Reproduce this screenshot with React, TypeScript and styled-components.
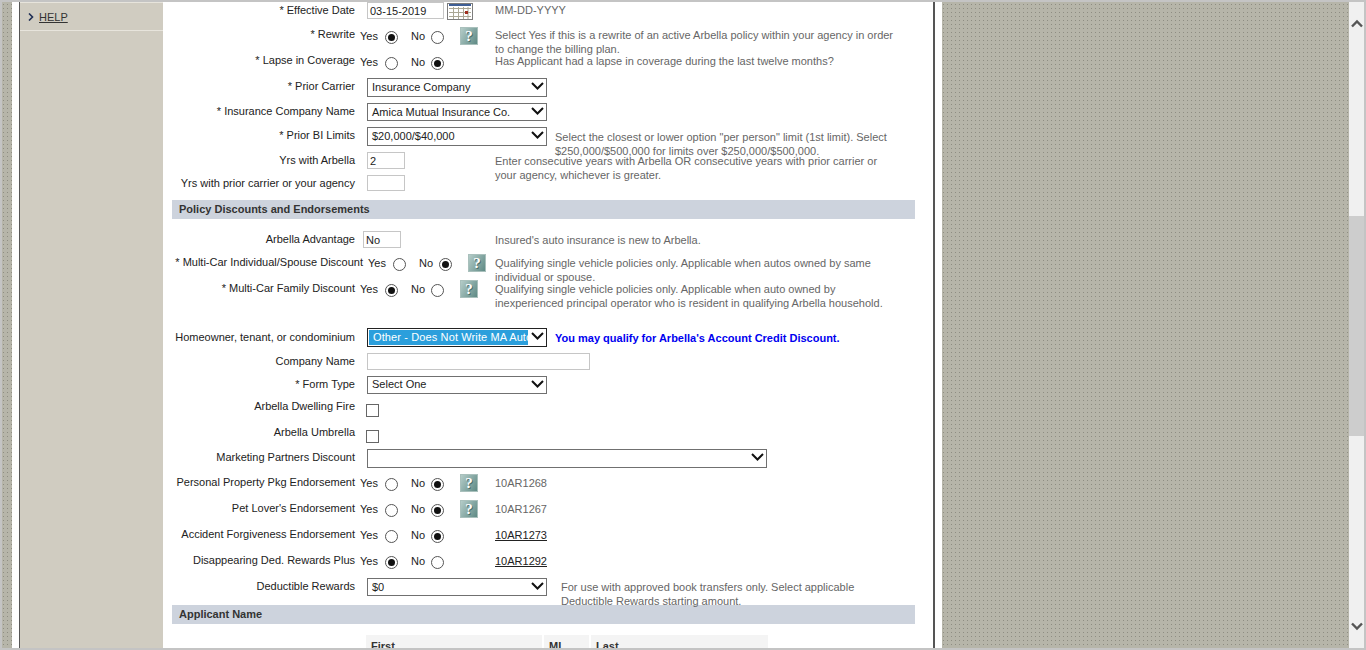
import React from "react";
import styled, { createGlobalStyle } from "styled-components";

const Global = createGlobalStyle`
  html, body { margin: 0; padding: 0; height: 650px; overflow: hidden; background: #fff; }
  body { font-family: "Liberation Sans", Arial, sans-serif; font-size: 11px; color: #222; }
`;

const Frame = styled.div`
  width: 1366px; height: 650px; box-sizing: border-box;
  border: 2px solid #c4c4c4; display: flex; overflow: hidden;
`;
const Texture = styled.div<{ $w: number }>`
  flex: 0 0 ${p => p.$w}px; height: 100%;
  background-color: #b6b5a9;
  background-image: radial-gradient(circle at 1.5px 2.5px, #8e8d82 0.7px, transparent 0.71px);
  background-size: 4px 4px;
`;
const Gutter = styled.div<{ $w: number }>`
  flex: 0 0 ${p => p.$w}px; background: #fff;
`;
const Page = styled.div`
  flex: 0 0 915px; display: flex; height: 100%; box-sizing: border-box;
  border-left: 1px solid #555; border-right: 2px solid #555;
`;
const Sidebar = styled.aside`flex: 0 0 143px; background: #d0ccc1;`;
const NavItem = styled.div`
  height: 29px; display: flex; align-items: center; padding-left: 8px; gap: 5px;
  border-top: 1px solid #e7e4dc; border-bottom: 1px solid #e7e4dc; box-sizing: border-box;
`;
const NavLink = styled.a`color: #333; text-decoration: underline; font-size: 11px;`;
const NavChevron = styled.svg`flex: none;`;
const Main = styled.main`flex: 0 0 770px; background: #fff; padding-right: 18px; box-sizing: border-box;`;

const Row = styled.div<{ $h: number }>`display: flex; align-items: flex-start; height: ${p => p.$h}px;`;
const Label = styled.div<{ $w?: number; $o: number }>`
  flex: 0 0 ${p => p.$w ?? 192}px; text-align: right; white-space: nowrap;
  margin-top: ${p => p.$o}px; line-height: 14px; color: #222; font-size: 11px;
`;
const Control = styled.div<{ $w?: number; $pad?: number }>`
  flex: 0 0 ${p => p.$w ?? 140}px; box-sizing: border-box; padding-left: ${p => p.$pad ?? 12}px;
  display: flex; align-items: flex-start;
`;
const Note = styled.div<{ $o?: number; $w?: number }>`
  width: ${p => p.$w ?? 405}px; margin-top: ${p => p.$o ?? 1}px; line-height: 14px; color: #666; font-size: 11px;
`;
const Credit = styled.div`
  margin-top: 3px; line-height: 14px; font-size: 11px; font-weight: bold; color: #0000f0; white-space: nowrap;
`;
const Code = styled.a`
  margin-top: 2px; line-height: 14px; font-size: 11px; color: #222; text-decoration: underline;
`;
const CodeGray = styled.div`margin-top: 2px; line-height: 14px; font-size: 11px; color: #666;`;

const TextField = styled.div<{ $w: number; $h?: number }>`
  width: ${p => p.$w}px; height: ${p => p.$h ?? 17}px; box-sizing: border-box;
  border: 1px solid #c6c6c6; padding-left: 2px; line-height: 16px; font-size: 11px; color: #222; background: #fff;
`;
const SelectBox = styled.div<{ $w?: number; $h?: number; $lh?: number; $focus?: boolean }>`
  position: relative; width: ${p => p.$w ?? 180}px; height: ${p => p.$h ?? 18}px; box-sizing: border-box;
  border: 1px solid ${p => (p.$focus ? "#222" : "#707070")}; padding: 0 18px 0 4px;
  line-height: ${p => p.$lh ?? 16}px; font-size: 11px; color: #222; background: #fff; overflow: hidden; white-space: nowrap;
`;
const SelectHighlight = styled.div`
  background: #2b9fdc; color: #fff; height: 15px; line-height: 15px; margin: 1px 0 0 -3px;
  padding-left: 4px; width: 155px; overflow: hidden; white-space: nowrap; letter-spacing: 0.12px;
`;
const Arrow = styled.svg`position: absolute; right: 2px; top: 2px;`;

const RadioLabel = styled.span<{ $ml?: number }>`
  margin-left: ${p => p.$ml ?? 0}px; margin-top: 2px; line-height: 14px; color: #222; font-size: 11px;
`;
const RadioDot = styled.span<{ $on?: boolean; $ml?: number }>`
  width: 13px; height: 13px; margin-left: ${p => p.$ml ?? 7}px; margin-top: 4px; border-radius: 50%;
  box-sizing: border-box; border: 1px solid #555; background: #fff; position: relative; flex: none;
  &::after {
    content: ""; display: ${p => (p.$on ? "block" : "none")}; position: absolute; left: 2px; top: 2px;
    width: 7px; height: 7px; border-radius: 50%; background: #111;
  }
`;
const HelpBox = styled.div`
  width: 18px; height: 18px; margin-left: 16px; flex: none; box-sizing: border-box;
  border: 1px solid #a9c0bc; background: linear-gradient(120deg, #b4ccc8, #5f8a85);
  color: #fff; font: bold 15px/16px "Liberation Serif", serif; text-align: center;
  text-shadow: 1px 1px 0 #4c6f6b;
`;
const Check = styled.span`
  width: 13px; height: 13px; box-sizing: border-box; border: 1px solid #666; background: #fff; display: block;
  margin-left: -1px;
`;
const SectionBar = styled.div<{ $mb: number }>`
  margin: 0 0 ${p => p.$mb}px 9px; width: 743px; height: 19px; background: #cdd3dd; box-sizing: border-box;
  padding-left: 7px; line-height: 19px; font-weight: bold; font-size: 11px; color: #333;
`;
const NameTable = styled.div`display: flex; margin-left: 203px; gap: 2px;`;
const NameHead = styled.div<{ $w: number }>`
  width: ${p => p.$w}px; height: 14px; background: #f4f4f4; padding: 4px 0 0 5px; font-weight: bold;
  line-height: 14px; font-size: 11px; color: #333; overflow: hidden; box-sizing: content-box;
`;

const Scrollbar = styled.div`
  position: relative; flex: 0 0 16px; height: 100%; background: #f0f0f0; box-sizing: border-box;
  border-right: 1px solid #f8f8f8;
`;
const Thumb = styled.div`position: absolute; left: 0; right: 0; top: 214px; height: 220px; background: #cdcdcd;`;
const ScrollArrow = styled.svg<{ $top?: number; $bottom?: number }>`
  position: absolute; left: 2px;
  ${p => (p.$top !== undefined ? `top: ${p.$top}px;` : `bottom: ${p.$bottom}px;`)}
`;
const CalendarIcon = styled.svg`margin: 1px 0 0 3px; flex: none;`;

const Chev = () => (
  <Arrow width="13" height="10" viewBox="0 0 13 10">
    <path d="M1 2 L6.5 7.5 L12 2" fill="none" stroke="#111" strokeWidth="2" />
  </Arrow>
);

const Select = ({ text, w, h, lh }: { text: string; w?: number; h?: number; lh?: number }) => (
  <SelectBox $w={w} $h={h} $lh={lh}>
    {text}
    <Chev />
  </SelectBox>
);

const Radios = ({ yes, help }: { yes?: boolean; help?: boolean }) => (
  <>
    <RadioLabel>Yes</RadioLabel>
    <RadioDot $on={yes} />
    <RadioLabel $ml={13}>No</RadioLabel>
    <RadioDot $on={!yes} $ml={6} />
    {help && <HelpBox>?</HelpBox>}
  </>
);

const Calendar = () => (
  <CalendarIcon width="26" height="17" viewBox="0 0 26 17">
    <rect x="0.5" y="0.5" width="25" height="16" fill="#fff" stroke="#7d7d7d" />
    <rect x="2" y="1" width="22" height="2" fill="#3f5f96" />
    <path d="M2 5.5H24M2 9.5H24M2 13.5H24M6.5 4V16M11.5 4V16M16.5 4V16M21 4V16" stroke="#aaa795" strokeWidth="1" fill="none" />
    <rect x="18" y="8" width="3" height="3" fill="#a03020" />
  </CalendarIcon>
);

export default function App() {
  return (
    <>
      <Global />
      <Frame>
        <Texture $w={10} />
        <Gutter $w={7} />
        <Page>
          <Sidebar>
            <NavItem>
              <NavChevron width="6" height="8" viewBox="0 0 6 8"><path d="M1 0.5 L4.5 4 L1 7.5" fill="none" stroke="#1f2f55" strokeWidth="1.6" /></NavChevron>
              <NavLink>HELP</NavLink>
            </NavItem>
          </Sidebar>
          <Main>
            <Row $h={25}>
              <Label $o={1}>* Effective Date</Label>
              <Control>
                <TextField $w={77}>03-15-2019</TextField>
                <Calendar />
              </Control>
              <Note>MM-DD-YYYY</Note>
            </Row>
            <Row $h={26}>
              <Label $o={0}>* Rewrite</Label>
              <Control $pad={5}><Radios yes help /></Control>
              <Note>Select Yes if this is a rewrite of an active Arbella policy within your agency in order to change the billing plan.</Note>
            </Row>
            <Row $h={25}>
              <Label $o={0}>* Lapse in Coverage</Label>
              <Control $pad={5}><Radios /></Control>
              <Note>Has Applicant had a lapse in coverage during the last twelve months?</Note>
            </Row>
            <Row $h={25}>
              <Label $o={1}>* Prior Carrier</Label>
              <Control><Select text="Insurance Company" h={19} /></Control>
            </Row>
            <Row $h={24}>
              <Label $o={1}>* Insurance Company Name</Label>
              <Control><Select text="Amica Mutual Insurance Co." /></Control>
            </Row>
            <Row $h={25}>
              <Label $o={1}>* Prior BI Limits</Label>
              <Control $w={200}><Select text="$20,000/$40,000" h={19} /></Control>
              <Note $o={3} $w={345}>Select the closest or lower option "per person" limit (1st limit). Select $250,000/$500,000 for limits over $250,000/$500,000.</Note>
            </Row>
            <Row $h={23}>
              <Label $o={1}>Yrs with Arbella</Label>
              <Control><TextField $w={38}>2</TextField></Control>
              <Note $o={2}>Enter consecutive years with Arbella OR consecutive years with prior carrier or your agency, whichever is greater.</Note>
            </Row>
            <Row $h={25}>
              <Label $o={1}>Yrs with prior carrier or your agency</Label>
              <Control><TextField $w={38} $h={16} /></Control>
            </Row>
            <SectionBar $mb={12}>Policy Discounts and Endorsements</SectionBar>
            <Row $h={23}>
              <Label $o={1}>Arbella Advantage</Label>
              <Control $pad={8}><TextField $w={38}>No</TextField></Control>
              <Note $o={2}>Insured's auto insurance is new to Arbella.</Note>
            </Row>
            <Row $h={26}>
              <Label $o={1} $w={200}>* Multi-Car Individual/Spouse Discount</Label>
              <Control $w={132} $pad={5}><Radios help /></Control>
              <Note $o={2}>Qualifying single vehicle policies only. Applicable when autos owned by same individual or spouse.</Note>
            </Row>
            <Row $h={48}>
              <Label $o={1}>* Multi-Car Family Discount</Label>
              <Control $pad={5}><Radios yes help /></Control>
              <Note $o={2}>Qualifying single vehicle policies only. Applicable when auto owned by inexperienced principal operator who is resident in qualifying Arbella household.</Note>
            </Row>
            <Row $h={25}>
              <Label $o={2}>Homeowner, tenant, or condominium</Label>
              <Control $w={200}>
                <SelectBox $h={19} $focus>
                  <SelectHighlight>Other - Does Not Write MA Auto</SelectHighlight>
                  <Chev />
                </SelectBox>
              </Control>
              <Credit>You may qualify for Arbella's Account Credit Discount.</Credit>
            </Row>
            <Row $h={23}>
              <Label $o={1}>Company Name</Label>
              <Control><TextField $w={223} /></Control>
            </Row>
            <Row $h={28}>
              <Label $o={1}>* Form Type</Label>
              <Control><Select text="Select One" lh={14} /></Control>
            </Row>
            <Row $h={26}>
              <Label $o={-5}>Arbella Dwelling Fire</Label>
              <Control><Check /></Control>
            </Row>
            <Row $h={19}>
              <Label $o={-5}>Arbella Umbrella</Label>
              <Control><Check /></Control>
            </Row>
            <Row $h={25}>
              <Label $o={1}>Marketing Partners Discount</Label>
              <Control $w={500}><Select text="" w={400} h={19} /></Control>
            </Row>
            <Row $h={26}>
              <Label $o={1}>Personal Property Pkg Endorsement</Label>
              <Control $pad={5}><Radios help /></Control>
              <CodeGray>10AR1268</CodeGray>
            </Row>
            <Row $h={26}>
              <Label $o={1}>Pet Lover's Endorsement</Label>
              <Control $pad={5}><Radios help /></Control>
              <CodeGray>10AR1267</CodeGray>
            </Row>
            <Row $h={26}>
              <Label $o={1}>Accident Forgiveness Endorsement</Label>
              <Control $pad={5}><Radios /></Control>
              <Code>10AR1273</Code>
            </Row>
            <Row $h={26}>
              <Label $o={1}>Disappearing Ded. Rewards Plus</Label>
              <Control $pad={5}><Radios yes /></Control>
              <Code>10AR1292</Code>
            </Row>
            <Row $h={27}>
              <Label $o={1}>Deductible Rewards</Label>
              <Control $w={206}><Select text="$0" /></Control>
              <Note $o={2} $w={320}>For use with approved book transfers only. Select applicable Deductible Rewards starting amount.</Note>
            </Row>
            <SectionBar $mb={11}>Applicant Name</SectionBar>
            <NameTable>
              <NameHead $w={171}>First</NameHead>
              <NameHead $w={40}>MI</NameHead>
              <NameHead $w={172}>Last</NameHead>
            </NameTable>
          </Main>
        </Page>
        <Gutter $w={7} />
        <Texture $w={407} />
        <Scrollbar>
          <ScrollArrow $top={17} width="12" height="9" viewBox="0 0 12 9">
            <path d="M1 7.5 L6 2.5 L11 7.5" fill="none" stroke="#555" strokeWidth="2.4" />
          </ScrollArrow>
          <Thumb />
          <ScrollArrow $bottom={17} width="12" height="9" viewBox="0 0 12 9">
            <path d="M1 1.5 L6 6.5 L11 1.5" fill="none" stroke="#555" strokeWidth="2.4" />
          </ScrollArrow>
        </Scrollbar>
      </Frame>
    </>
  );
}
